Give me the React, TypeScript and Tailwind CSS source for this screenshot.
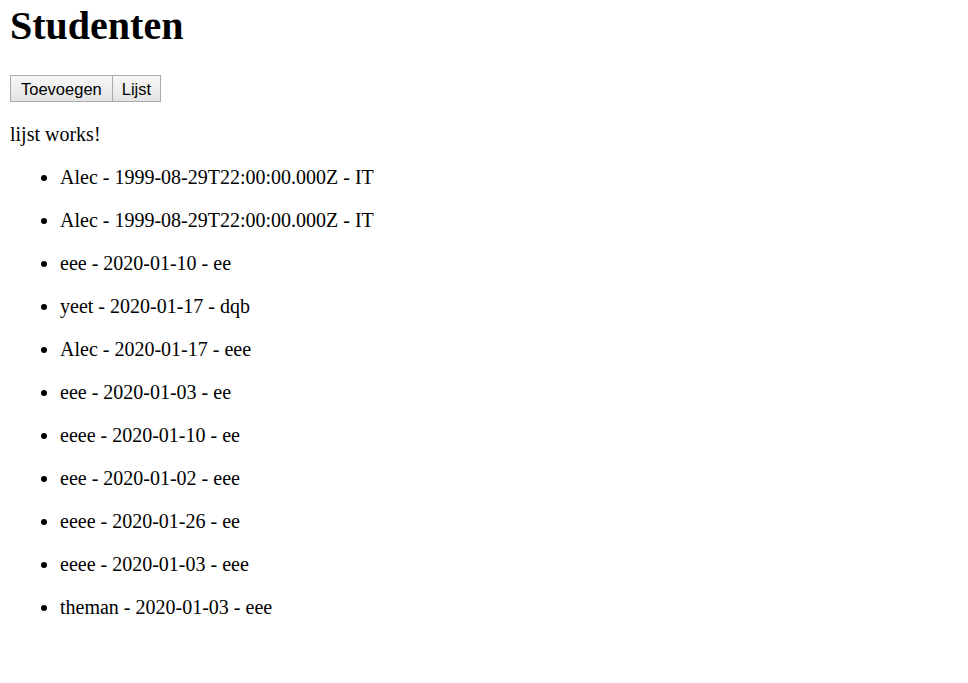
import React from "react";

const items = [
  "Alec - 1999-08-29T22:00:00.000Z - IT",
  "Alec - 1999-08-29T22:00:00.000Z - IT",
  "eee - 2020-01-10 - ee",
  "yeet - 2020-01-17 - dqb",
  "Alec - 2020-01-17 - eee",
  "eee - 2020-01-03 - ee",
  "eeee - 2020-01-10 - ee",
  "eee - 2020-01-02 - eee",
  "eeee - 2020-01-26 - ee",
  "eeee - 2020-01-03 - eee",
  "theman - 2020-01-03 - eee",
];

export default function App() {
  return (
    <div
      className="min-h-[683px] bg-white px-[10px] pt-[3px] text-black"
      style={{ fontFamily: '"Liberation Serif", "Times New Roman", serif' }}
    >
      <h1 className="text-[40px] font-bold leading-[46px]">Studenten</h1>
      <div className="mt-[26px] flex">
        <button
          className="h-[27px] border border-[#a9a9a9] bg-gradient-to-b from-[#f7f7f7] to-[#e4e4e4] px-[10px] text-[16.5px] leading-[20px] text-black"
          style={{ fontFamily: '"Liberation Sans", Arial, sans-serif' }}
        >
          Toevoegen
        </button>
        <button
          className="-ml-px h-[27px] border border-[#a9a9a9] bg-gradient-to-b from-[#f7f7f7] to-[#e4e4e4] px-[9px] text-[16.5px] leading-[20px] text-black"
          style={{ fontFamily: '"Liberation Sans", Arial, sans-serif' }}
        >
          Lijst
        </button>
      </div>
      <p className="mt-[21px] text-[20px] leading-[23px]">lijst works!</p>
      <ul className="mt-[20px] list-disc pl-[50px] text-[20px] leading-[23px]">
        {items.map((t, i) => (
          <li key={i} className="mb-[20px]">
            {t}
          </li>
        ))}
      </ul>
    </div>
  );
}
